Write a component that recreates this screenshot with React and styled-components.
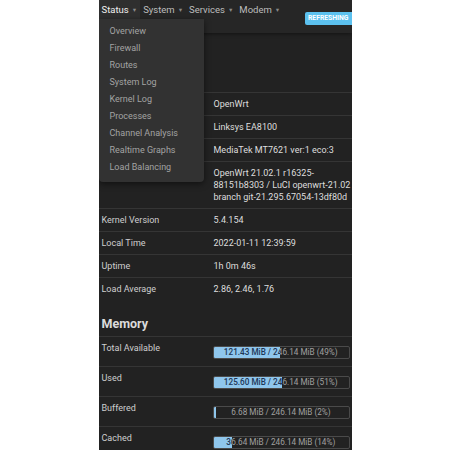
import React from 'react';
import styled, { createGlobalStyle } from 'styled-components';

const GlobalStyle = createGlobalStyle`
  html, body {
    margin: 0;
    padding: 0;
    background: #ffffff;
  }
  body {
    font-family: Roboto, "Noto Sans", "Liberation Sans", sans-serif;
  }
`;

const Phone = styled.div`
  position: relative;
  width: 253px;
  height: 450px;
  margin: 0 auto;
  background: #222222;
  overflow: hidden;
`;

const Header = styled.header`
  display: flex;
  justify-content: space-between;
  align-items: flex-start;
  height: 33px;
  background: #262626;
  box-shadow: 0 1px 4px rgba(0, 0, 0, 0.45);
`;

const Nav = styled.nav`
  position: relative;
  display: flex;
`;

const NavItem = styled.div`
  display: flex;
  align-items: center;
  gap: 3px;
  height: 19px;
  padding: 0 3px;
  font-size: 9.5px;
  color: ${p => (p.active ? '#f0f0f0' : '#bdbdbd')};
  background: ${p => (p.active ? '#2f2f2f' : 'transparent')};
`;

const Caret = styled.span`
  font-size: 5.5px;
  color: #8a8a8a;
`;

const Dropdown = styled.ul`
  position: absolute;
  top: 19px;
  left: 0;
  width: 94px;
  margin: 0;
  padding: 4px 0 6px 11px;
  list-style: none;
  background: #323232;
  border-radius: 0 0 4px 4px;
  box-shadow: 0 2px 6px rgba(0, 0, 0, 0.5);
  z-index: 5;
`;

const DropItem = styled.li`
  height: 17px;
  line-height: 17px;
  font-size: 9px;
  color: #a3a3a3;
  white-space: nowrap;
`;

const Badge = styled.span`
  margin-top: 12px;
  padding: 0 3px;
  height: 13px;
  line-height: 13px;
  font-size: 6.8px;
  font-weight: 700;
  color: #ffffff;
  background: #5cc1ef;
  border-radius: 2px 0 0 2px;
`;

const Main = styled.main`
  padding: 0;
`;

const PageTitle = styled.h1`
  margin: 0;
  padding: 10px 3px 0;
  height: 20px;
  font-size: 14px;
  font-weight: 500;
  color: #dddddd;
`;

const SectionTitle = styled.h2`
  margin: 0;
  padding: ${p => p.pad || '8px 3px 7px'};
  line-height: 14px;
  font-size: 12.5px;
  font-weight: 700;
  color: #dcdcdc;
`;

const Table = styled.div`
  display: flex;
  flex-direction: column;
`;

const Row = styled.div`
  display: grid;
  grid-template-columns: 112px minmax(0, 1fr);
  align-items: start;
  padding: ${p => (p.bar ? '5px 2px 7px 3px' : '5px 0 5px 3px')};
  border-top: 1px solid #353535;
  font-size: 9px;
  line-height: 12px;
`;

const Label = styled.div`
  color: #cfcfcf;
`;

const Value = styled.div`
  color: #dedede;
`;

const BarCell = styled.div`
  padding-top: 4px;
  margin-left: -1px;
`;

const Bar = styled.div`
  position: relative;
  height: 13px;
  border: 1px solid #4a4a4a;
  border-radius: 2px;
  box-sizing: border-box;
  overflow: hidden;
`;

const BarText = styled.div`
  position: absolute;
  top: 0;
  left: 0;
  width: 135px;
  height: 11px;
  line-height: 11px;
  text-align: center;
  font-size: 8.2px;
  color: ${p => (p.dark ? '#1d3657' : '#a0a0a0')};
  font-weight: ${p => (p.dark ? 500 : 400)};
  white-space: nowrap;
`;

const Fill = styled.div`
  position: absolute;
  top: 0;
  left: 0;
  bottom: 0;
  background: #8fc6ec;
  overflow: hidden;
`;

const menu = [
  'Overview',
  'Firewall',
  'Routes',
  'System Log',
  'Kernel Log',
  'Processes',
  'Channel Analysis',
  'Realtime Graphs',
  'Load Balancing',
];

const system = [
  ['Hostname', 'OpenWrt'],
  ['Model', 'Linksys EA8100'],
  ['Architecture', 'MediaTek MT7621 ver:1 eco:3'],
  ['Firmware Version', 'OpenWrt 21.02.1 r16325-88151b8303 / LuCI openwrt-21.02 branch git-21.295.67054-13df80d'],
  ['Kernel Version', '5.4.154'],
  ['Local Time', '2022-01-11 12:39:59'],
  ['Uptime', '1h 0m 46s'],
  ['Load Average', '2.86, 2.46, 1.76'],
];

const memory = [
  ['Total Available', '121.43 MiB / 246.14 MiB (49%)', 49],
  ['Used', '125.60 MiB / 246.14 MiB (51%)', 51],
  ['Buffered', '6.68 MiB / 246.14 MiB (2%)', 2],
  ['Cached', '36.64 MiB / 246.14 MiB (14%)', 14],
];

const Progress = ({ text, pct }) => (
  <Bar>
    <BarText>{text}</BarText>
    <Fill style={{ width: pct + '%' }}>
      <BarText dark>{text}</BarText>
    </Fill>
  </Bar>
);

const App = () => (
  <>
    <GlobalStyle />
    <Phone>
      <Header>
        <Nav>
          <NavItem active>Status <Caret>▼</Caret></NavItem>
          <NavItem>System <Caret>▼</Caret></NavItem>
          <NavItem>Services <Caret>▼</Caret></NavItem>
          <NavItem>Modem <Caret>▼</Caret></NavItem>
          <Dropdown>
            {menu.map(m => <DropItem key={m}>{m}</DropItem>)}
          </Dropdown>
        </Nav>
        <Badge>REFRESHING</Badge>
      </Header>
      <Main>
        <PageTitle>Status</PageTitle>
        <SectionTitle>System</SectionTitle>
        <Table>
          {system.map(([k, v]) => (
            <Row key={k}>
              <Label>{k}</Label>
              <Value>{v}</Value>
            </Row>
          ))}
        </Table>
        <SectionTitle pad="17px 3px 5px">Memory</SectionTitle>
        <Table>
          {memory.map(([k, t, p]) => (
            <Row key={k} bar>
              <Label>{k}</Label>
              <BarCell><Progress text={t} pct={p} /></BarCell>
            </Row>
          ))}
        </Table>
      </Main>
    </Phone>
  </>
);

export default App;
